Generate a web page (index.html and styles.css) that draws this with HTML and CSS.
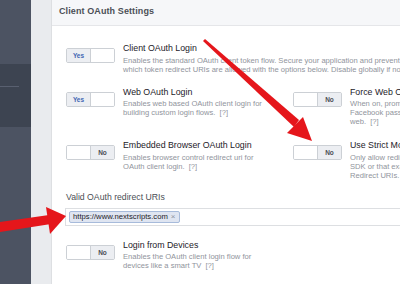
FILE: index.html
```html
<!DOCTYPE html>
<html lang="en">
<head>
    <meta charset="UTF-8">
    <title>Client OAuth Settings</title>
    <link rel="stylesheet" href="styles.css">
</head>
<body>
    <div class="page">
        <!-- left nav -->
        <aside class="sidebar">
            <div class="side-band"><span class="side-line"></span></div>
        </aside>

        <main class="card">
            <div class="card-head">Client OAuth Settings</div>

            <div class="card-body">
                <div class="setting">
                    <span class="toggle on"><span class="seg">Yes</span><span class="seg"></span></span>
                    <div class="setting-text">
                        <div class="setting-title">Client OAuth Login</div>
                        <div class="setting-desc nowrap">Enables the standard OAuth client token flow. Secure your application and prevent abuse by locking down<br>which token redirect URIs are allowed with the options below. Disable globally if not used. [?]</div>
                    </div>
                </div>

                <div class="setting-grid">
                    <div class="setting">
                        <span class="toggle on"><span class="seg">Yes</span><span class="seg"></span></span>
                        <div class="setting-text">
                            <div class="setting-title">Web OAuth Login</div>
                            <div class="setting-desc">Enables web based OAuth client login for building custom login flows. <span class="help">[?]</span></div>
                        </div>
                    </div>
                    <div class="setting">
                        <span class="toggle off"><span class="seg"></span><span class="seg">No</span></span>
                        <div class="setting-text">
                            <div class="setting-title">Force Web OAuth Reauthentication</div>
                            <div class="setting-desc nowrap">When on, prompts people to enter their<br>Facebook password in order to log in on the<br>web. <span class="help">[?]</span></div>
                        </div>
                    </div>

                    <div class="setting">
                        <span class="toggle off"><span class="seg"></span><span class="seg">No</span></span>
                        <div class="setting-text">
                            <div class="setting-title">Embedded Browser OAuth Login</div>
                            <div class="setting-desc">Enables browser control redirect uri for OAuth client login. <span class="help">[?]</span></div>
                        </div>
                    </div>
                    <div class="setting">
                        <span class="toggle off"><span class="seg"></span><span class="seg">No</span></span>
                        <div class="setting-text">
                            <div class="setting-title">Use Strict Mode for Redirect URIs</div>
                            <div class="setting-desc nowrap">Only allow redirects that use the Facebook<br>SDK or that exactly match the Valid OAuth<br>Redirect URIs. Strongly recommended. <span class="help">[?]</span></div>
                        </div>
                    </div>
                </div>

                <div class="field">
                    <label class="field-label">Valid OAuth redirect URIs</label>
                    <div class="uri-input">
                        <span class="uri-tag">https://www.nextscripts.com <span class="uri-x">&times;</span></span>
                    </div>
                </div>

                <div class="setting">
                    <span class="toggle off"><span class="seg"></span><span class="seg">No</span></span>
                    <div class="setting-text">
                        <div class="setting-title">Login from Devices</div>
                        <div class="setting-desc">Enables the OAuth client login flow for devices like a smart TV <span class="help">[?]</span></div>
                    </div>
                </div>
            </div>
        </main>

        <!-- red annotation arrows drawn over the screenshot -->
        <svg class="arrows" width="400" height="284" viewBox="0 0 400 284">
            <polygon points="203,41 205,39 299,120 294,127" fill="#e5161b"/>
            <polygon points="312,141 287,133 303,117" fill="#e5161b"/>
            <polygon points="0,222 49,215 51,224 0,232" fill="#e5161b"/>
            <polygon points="66,216 46,207 50,234" fill="#e5161b"/>
        </svg>
    </div>
</body>
</html>
```

FILE: styles.css
```css
* {
    margin: 0;
    padding: 0;
    box-sizing: border-box;
}

body {
    background: #e9ebee;
    font-family: 'Liberation Sans', Arial, sans-serif;
    color: #1d2129;
    overflow: hidden;
}

.page {
    position: relative;
    display: flex;
    width: 700px;
    height: 284px;
}

/* left nav */
.sidebar {
    width: 31px;
    flex-shrink: 0;
    background: #4c5362;
    padding-top: 64px;
}

.side-band {
    height: 63px;
    background: #3d4451;
    padding-top: 22px;
}

.side-line {
    display: block;
    width: 19px;
    height: 1px;
    background: #596070;
}

/* settings card */
.card {
    flex: 1;
    margin-left: 20px;
    background: white;
    border-left: 1px solid #dddfe2;
}

.card-head {
    background: #f6f7f9;
    border-bottom: 1px solid #e5e6e9;
    padding: 6px 7px 8px;
    font-size: 9px;
    line-height: 11px;
    font-weight: bold;
    color: #4b4f56;
    letter-spacing: 0.1px;
}

.card-body {
    padding: 17px 14px;
}

.setting {
    display: flex;
    align-items: flex-start;
    gap: 8px;
}

.setting-grid {
    display: grid;
    grid-template-columns: 207px 1fr;
    column-gap: 20px;
    row-gap: 14px;
    margin-top: 13px;
}

.setting-text {
    width: 150px;
}

.setting-title {
    font-size: 8.8px;
    line-height: 11px;
    color: #1d2129;
    white-space: nowrap;
    margin-bottom: 1.5px;
}

.setting-desc {
    font-size: 7.6px;
    line-height: 9px;
    color: #90949c;
}

.nowrap {
    white-space: nowrap;
}

.help {
    margin-left: 2px;
}

/* yes / no switch */
.toggle {
    display: flex;
    flex-shrink: 0;
    width: 49px;
    height: 15px;
    margin-top: 5px;
    border: 1px solid #ccd0d5;
    border-radius: 2px;
    overflow: hidden;
}

.seg {
    flex: 1;
    display: flex;
    align-items: center;
    justify-content: center;
    font-size: 6.5px;
    font-weight: bold;
    background: white;
}

.seg + .seg {
    border-left: 1px solid #ccd0d5;
}

.toggle.on .seg:first-child {
    background: #eceef2;
    color: #4267b2;
}

.toggle.off .seg:last-child {
    background: #eceef2;
    color: #4b4f56;
}

/* redirect uri field */
.field {
    margin-top: 12px;
    margin-bottom: 14px;
}

.field-label {
    display: block;
    font-size: 8.7px;
    line-height: 11px;
    color: #4b4f56;
    margin-bottom: 5px;
}

.uri-input {
    display: flex;
    align-items: center;
    height: 18px;
    margin-left: -1px;
    padding: 0 3px;
    border: 1px solid #dddfe2;
}

.uri-tag {
    display: inline-flex;
    align-items: center;
    gap: 3px;
    height: 12px;
    padding: 0 3px;
    background: #dfe5f1;
    border: 1px solid #a7bbdb;
    border-radius: 2px;
    font-size: 7.7px;
    color: #1d2129;
}

.uri-x {
    color: #8d949e;
    font-size: 8px;
}

.arrows {
    position: absolute;
    top: 0;
    left: 0;
    pointer-events: none;
}
```
